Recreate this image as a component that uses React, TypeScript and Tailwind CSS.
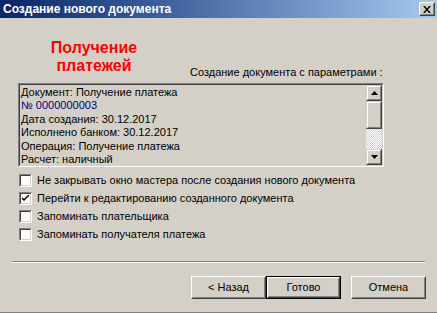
import React from "react";

const raised =
  "border border-t-white border-l-white border-b-[#404040] border-r-[#404040]";
const raisedInner =
  "border border-t-[#d4d0c8] border-l-[#d4d0c8] border-b-[#808080] border-r-[#808080]";

function UpArrow({ down }: { down?: boolean }) {
  return (
    <svg width="7" height="4" viewBox="0 0 7 4">
      {down ? (
        <polygon points="0,0 7,0 3.5,4" fill="#000" />
      ) : (
        <polygon points="3.5,0 7,4 0,4" fill="#000" />
      )}
    </svg>
  );
}

function ScrollBtn({ down }: { down?: boolean }) {
  return (
    <div className="w-[16px] h-[16px] border border-t-[#d4d0c8] border-l-[#d4d0c8] border-b-[#404040] border-r-[#404040]">
      <div className="w-full h-full border border-t-white border-l-white border-b-[#808080] border-r-[#808080] bg-[#d4d0c8] flex items-center justify-center">
        <UpArrow down={down} />
      </div>
    </div>
  );
}

function Checkbox({ checked, label }: { checked?: boolean; label: string }) {
  return (
    <div className="flex items-center h-[18px]">
      <div className="w-[13px] h-[13px] border border-t-[#808080] border-l-[#808080] border-b-white border-r-white">
        <div className="w-full h-full border border-t-[#404040] border-l-[#404040] border-b-[#d4d0c8] border-r-[#d4d0c8] bg-white flex items-center justify-center">
          {checked && (
            <svg width="7" height="7" viewBox="0 0 7 7">
              <path d="M0 2 L0 4 L2 6 L7 1 L7 -1 L2 4 Z" fill="#000" />
            </svg>
          )}
        </div>
      </div>
      <span className="ml-[5px]">{label}</span>
    </div>
  );
}

function Button({ label, isDefault }: { label: string; isDefault?: boolean }) {
  const inner = (
    <div className={`w-full h-full ${raised}`}>
      <div className={`w-full h-full ${raisedInner} bg-[#d4d0c8] flex items-center justify-center`}>
        {label}
      </div>
    </div>
  );
  return isDefault ? (
    <div className="w-[75px] h-[23px] border border-black">{inner}</div>
  ) : (
    <div className="w-[75px] h-[23px]">{inner}</div>
  );
}

export default function App() {
  const lines = [
    { t: "Документ: Получение платежа" },
    { t: "№ 0000000003", blue: true },
    { t: "Дата создания: 30.12.2017" },
    { t: "Исполнено банком: 30.12.2017" },
    { t: "Операция: Получение платежа" },
    { t: "Расчет: наличный" },
  ];
  return (
    <div
      className="w-[437px] h-[313px] bg-[#d4d0c8] flex flex-col text-[11px] text-black border-b border-[#808080] overflow-hidden"
      style={{ fontFamily: '"Liberation Sans", Arial, sans-serif' }}
    >
      {/* Title bar */}
      <div className="h-[18px] flex items-center justify-between pl-[3px] pr-[2px] bg-gradient-to-r from-[#0a246a] to-[#a6caf0]">
        <span className="text-white font-bold text-[12px] leading-none">
          Создание нового документа
        </span>
        <div className={`w-[16px] h-[14px] ${raised}`}>
          <div className={`w-full h-full ${raisedInner} bg-[#d4d0c8] flex items-center justify-center`}>
            <svg width="8" height="7" viewBox="0 0 8 7">
              <path d="M0 0 L2 0 L4 2.5 L6 0 L8 0 L5 3.5 L8 7 L6 7 L4 4.5 L2 7 L0 7 L3 3.5 Z" fill="#000" />
            </svg>
          </div>
        </div>
      </div>

      {/* Header */}
      <div className="flex h-[65px] pl-[18px]">
        <div className="w-[152px] pt-[21px] flex flex-col items-center text-[#ff0000] font-bold text-[16px] leading-[18px]">
          <span>Получение</span>
          <span>платежей</span>
        </div>
        <div className="flex-1 pt-[48px] pl-[20px] leading-[13px]">
          Создание документа с параметрами :
        </div>
      </div>

      {/* Listbox */}
      <div className="ml-[18px] w-[366px] h-[84px] border border-t-[#808080] border-l-[#808080] border-b-white border-r-white">
        <div className="w-full h-full border border-t-[#404040] border-l-[#404040] border-b-[#d4d0c8] border-r-[#d4d0c8] flex">
          <div className="flex-1 pl-[1px] pt-[1px] flex flex-col leading-[13.4px]">
            {lines.map((l, i) => (
              <span key={i} className={l.blue ? "text-[#000080]" : ""}>
                {l.t}
              </span>
            ))}
          </div>
          <div className="w-[16px] flex flex-col">
            <ScrollBtn />
            <div className="w-[16px] h-[28px] border border-t-[#d4d0c8] border-l-[#d4d0c8] border-b-[#404040] border-r-[#404040]">
              <div className="w-full h-full border border-t-white border-l-white border-b-[#808080] border-r-[#808080] bg-[#d4d0c8]" />
            </div>
            <div className="flex-1 bg-[repeating-conic-gradient(#ffffff_0_25%,#d4d0c8_0_50%)] bg-[length:2px_2px]" />
            <ScrollBtn down />
          </div>
        </div>
      </div>

      {/* Checkboxes */}
      <div className="pl-[19px] pt-[4px] flex flex-col">
        <Checkbox label="Не закрывать окно мастера после создания нового документа" />
        <Checkbox checked label="Перейти к редактированию созданного документа" />
        <Checkbox label="Запоминать плательщика" />
        <Checkbox label="Запоминать получателя платежа" />
      </div>

      {/* Separator */}
      <div className="mt-[18px] mx-[12px] h-[2px] border-t border-t-[#808080] border-b border-b-white" />

      {/* Buttons */}
      <div className="mt-[13px] flex justify-end pr-[11px]">
        <Button label="< Назад" />
        <Button label="Готово" isDefault />
        <div className="w-[10px]" />
        <Button label="Отмена" />
      </div>
    </div>
  );
}
